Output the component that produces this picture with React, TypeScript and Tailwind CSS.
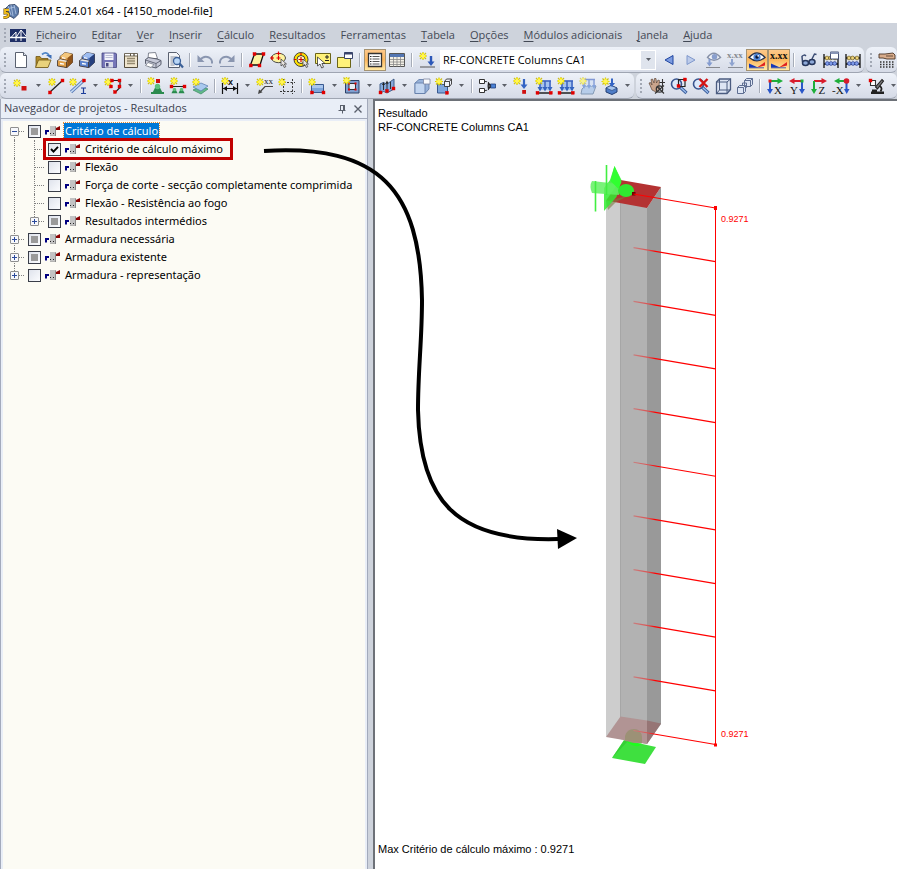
import { useState } from "react";
import type { ReactNode } from "react";

/* ---------- drawing helpers ---------- */

function Glyph({ children }: { children: ReactNode }) {
  return (
    <svg viewBox="0 0 18 18" className="h-[18px] w-[18px] shrink-0" fill="none" aria-hidden="true">
      {children}
    </svg>
  );
}

function Spark({ x = 4, y = 4 }: { x?: number; y?: number }) {
  return (
    <g>
      <path
        d={`M${x} ${y - 4}v8M${x - 4} ${y}h8M${x - 3} ${y - 3}l6 6M${x + 3} ${y - 3}l-6 6`}
        stroke="#cdbf1a"
        strokeWidth="1.2"
      />
      <path d={`M${x} ${y - 3}v6M${x - 3} ${y}h6`} stroke="#fff200" strokeWidth="1.8" />
      <circle cx={x} cy={y} r="2" fill="#fff45a" />
    </g>
  );
}

function Dot({ x, y, c = "#e00000" }: { x: number; y: number; c?: string }) {
  return <rect x={x - 1.5} y={y - 1.5} width="3" height="3" fill={c} stroke={c} strokeWidth="0.4" />;
}

const cabinet = (front: string, side: string, top: string) => (
  <>
    <path d="M4 5.500l5-4 7.500 1.500v8.500l-5.500 5-7-2z" fill={front} stroke="#3b2f28" strokeWidth="0.8" />
    <path d="M4 5.500l5-4 7.500 1.500-5 4z" fill={top} />
    <path d="M11.500 7l5-4v8.500l-5.500 5z" fill={side} />
    <path d="M1.500 9.500L4 8l7.500 1.500-1 1.500v5.500l-9-1.500z" fill={front} stroke="#3b2f28" strokeWidth="0.8" />
    <path d="M2 9.500L4 8.300l7 1.400-1 1.300z" fill="#e9e6e2" />
    <path d="M6 6.700l3.500.700M4 12.500l4 .700" stroke="#fff" strokeWidth="1.300" />
  </>
);

const abacus = (
  <>
    <path d="M2 3v14M16 3v14M2 7h14M2 13h14" stroke="#111" strokeWidth="1.3" />
    <g fill="#ecd27a" stroke="#5b4a10" strokeWidth="0.6">
      <circle cx="5" cy="7" r="1.9" />
      <circle cx="8.6" cy="7" r="1.9" />
      <circle cx="13" cy="7" r="1.9" />
    </g>
    <g fill="#7f9cea" stroke="#1d2f80" strokeWidth="0.6">
      <circle cx="5.3" cy="12.5" r="1.9" />
      <circle cx="9" cy="12.5" r="1.9" />
      <circle cx="12.6" cy="12.5" r="1.9" />
    </g>
  </>
);

const supportCone = (x: number, y: number, s: number) => (
  <g>
    <path d={`M${x - s * 1.8} ${y + s * 2.2}L${x - s * 0.7} ${y}h${s * 1.4}L${x + s * 1.8} ${y + s * 2.2}z`} fill="#2a8a4e" />
    <circle cx={x} cy={y} r={s} fill="#5cc27c" />
  </g>
);

const lineLoad = (
  <>
    <path d="M3 16h13" stroke="#222" strokeWidth="1.3" />
    <path d="M4 3.500h12V13H4z" fill="#a5c3ef" />
    <path d="M4 4h12M5 4v7M10 4v7M15 4v7" stroke="#3d62c0" strokeWidth="1.5" />
    <path d="M2.500 10h5L5 14.500zM7.500 10h5L10 14.500zM12.500 10h5L15 14.500z" fill="#3564c0" />
    <Dot x={2.500} y={15.800} />
    <Dot x={15.800} y={15.800} />
  </>
);

const magnifier = (
  <>
    <path d="M10 10l6.500 6" stroke="#3c5f9c" strokeWidth="3.200" />
    <path d="M10.500 10.500l5.500 5" stroke="#9fc0f0" strokeWidth="1.200" />
    <circle cx="6.500" cy="7" r="5" fill="#dce9fb" stroke="#39558f" strokeWidth="1.600" />
  </>
);

const eye = (
  <>
    <path d="M1 6.500Q9 -2.500 17 6.500Q9 13 1 6.500z" fill="#fff" stroke="#28324c" strokeWidth="1.400" />
    <circle cx="9" cy="6" r="3.600" fill="#4f86d8" />
    <circle cx="9" cy="6" r="1.700" fill="#0b1535" />
    <circle cx="10.200" cy="4.800" r="0.900" fill="#fff" />
  </>
);

const wedge = (
  <>
    <path d="M1 16.500v-4l9 4z" fill="#1738b8" />
    <path d="M9 16.500l8-5.500v3.500z" fill="#e02020" />
    <path d="M1 16.800h15" stroke="#1738b8" strokeWidth="0.800" />
  </>
);

const glyphs: Record<string, ReactNode> = {
  novo: (
    <>
      <path d="M3.500 1.500h8l3 3v12h-11z" fill="#fff" stroke="#5a6170" />
      <path d="M11.500 1.500v3h3" fill="#dfe5ef" stroke="#5a6170" />
    </>
  ),
  abrir: (
    <>
      <path d="M2 5.500h4l1.500 2H14V16H2z" fill="#b08a2a" stroke="#6e5614" strokeWidth="0.8" />
      <path d="M1.500 16.500l3-7.500h12.500l-3 7.500z" fill="#e9d27c" stroke="#6e5614" strokeWidth="0.8" />
      <path d="M8 3.500q4-3.500 7 .500" stroke="#4f86c8" strokeWidth="1.800" />
      <path d="M12 4h5.500v4z" fill="#3d6fb8" />
    </>
  ),
  arquivo: cabinet("#e0a04a", "#8f531a", "#f3c67c"),
  biblioteca: cabinet("#5b83cf", "#26407f", "#9dbcf0"),
  guardar: (
    <>
      <path d="M2 2h13.500l1 1V16.500H2z" fill="#7676b8" stroke="#474780" strokeWidth="0.800" />
      <path d="M4.500 2.500h9v6.500h-9z" fill="#f3f4fb" />
      <path d="M5.500 4.500h7M5.500 6.500h7" stroke="#a9adcb" strokeWidth="0.800" />
      <path d="M5 11h8v5.500H5z" fill="#d9dbe8" />
      <path d="M6 12h2.500v3.500H6z" fill="#474780" />
    </>
  ),
  relatorio: (
    <>
      <path d="M2.500 3.500h13v13h-13z" fill="#efe4cd" stroke="#544b3b" />
      <path d="M2.500 2.500h6v2.500h-6zM8.500 2.500h3.500v2.500H8.500zM12 2.500h3.500v2.500H12z" fill="#fff" stroke="#544b3b" strokeWidth="0.800" />
      <path d="M5 7.500h8M5 10h8M5 12.500h8" stroke="#95896f" strokeWidth="1.300" />
    </>
  ),
  imprimir: (
    <>
      <path d="M4 8l.500-6 7-.500 2 6z" fill="#fff" stroke="#666b78" strokeWidth="0.800" />
      <path d="M1.500 8.500l3-2 8.500 1.500 4 1.500v4L12 17l-8-2-2.500-2.500z" fill="#c6c9d8" stroke="#4c5160" strokeWidth="0.900" />
      <path d="M1.500 9l10.500 3.500 5-3M12 12.500V17" stroke="#5b6070" strokeWidth="0.900" />
      <path d="M4 11.500l6 2-3 3-5.500-2z" fill="#fff" stroke="#666b78" strokeWidth="0.700" />
    </>
  ),
  previsualizar: (
    <>
      <path d="M2.500 1.500h8l3 3v12h-11z" fill="#f4f5f8" stroke="#5a6170" />
      <path d="M4.500 6h6M4.500 8h4M4.500 10h3M4.500 12h3M4.500 14h4" stroke="#8b92a0" />
      <circle cx="11" cy="10" r="3.500" fill="#b9d6f6" stroke="#3b6098" strokeWidth="1.300" />
      <path d="M13.500 12.500l3.500 4" stroke="#3b6098" strokeWidth="2.200" />
    </>
  ),
  anular: (
    <>
      <path d="M4 9q4-5 9-2.500q3.500 2 3 6" stroke="#8a96b0" strokeWidth="2" />
      <path d="M1.500 4v7h7z" fill="#8a96b0" />
      <path d="M2 15.500h14" stroke="#8a96b0" />
    </>
  ),
  refazer: (
    <>
      <path d="M14 9q-4-5-9-2.500q-3.500 2-3 6" stroke="#8a96b0" strokeWidth="2" />
      <path d="M16.500 4v7h-7z" fill="#8a96b0" />
      <path d="M2 15.500h14" stroke="#8a96b0" />
    </>
  ),
  plano: (
    <>
      <path d="M6.500 3h9l-3.500 11H2.500z" fill="#fdf3a0" stroke="#111" strokeWidth="1.300" />
      <Dot x={6.500} y={3} />
      <Dot x={15.500} y={3} />
      <Dot x={2.800} y={14.500} />
      <Dot x={11.500} y={14.500} />
    </>
  ),
  elipse: (
    <>
      <ellipse cx="8.500" cy="7" rx="7" ry="4.700" fill="#fdf3a0" stroke="#222" strokeWidth="0.800" />
      <path d="M8.500 0.500v4M6.500 2.500h4M0 7h4M2 5v4M6.500 7h4M8.500 5v4" stroke="#e00000" strokeWidth="1.200" />
      <path d="M11 8v7l1.800-1.500 1.500 3 1.500-.800-1.500-2.700h2.200z" fill="#e8e4e0" stroke="#333" strokeWidth="0.700" />
    </>
  ),
  circulo: (
    <>
      <circle cx="9" cy="8.500" r="7" fill="#ffe100" stroke="#333" strokeWidth="0.900" />
      <circle cx="9" cy="8.500" r="4" fill="#fff9c0" stroke="#222" strokeWidth="0.900" />
      <path d="M9 6v5M6.500 8.500h5M2 8.500h2M9 2v2" stroke="#e00000" strokeWidth="1.200" />
      <path d="M11 8v7l1.800-1.500 1.500 3 1.500-.800-1.500-2.700h2.200z" fill="#e8e4e0" stroke="#333" strokeWidth="0.700" />
    </>
  ),
  selecao: (
    <>
      <path d="M1.500 2.500h15v10h-15z" fill="#fff27a" stroke="#6b6418" />
      <path d="M11 6h4M13 4v4M11 9.500h4" stroke="#222" />
      <path d="M3.500 6v9l2.500-2 1.700 4 1.800-.800-1.600-3.700H11z" fill="#fff" stroke="#333" strokeWidth="0.800" />
    </>
  ),
  pasta: (
    <>
      <path d="M1.500 6.500h13v10h-13z" fill="#fff27a" stroke="#6b6418" />
      <path d="M8.500 1.500h8v6h-8z" fill="#fff" stroke="#39446b" />
      <path d="M8.500 1.500h8v2h-8z" fill="#39446b" />
    </>
  ),
  navegador: (
    <>
      <path d="M2.500 2.500h13v13h-13z" fill="#fff" stroke="#333" strokeWidth="1.300" />
      <path d="M6.500 5.500h7M6.500 8h7M6.500 10.500h7M6.500 13h7" stroke="#555" />
      <path d="M4 5.500h1.500M4 8h1.500M4 10.500h1.500M4 13h1.500" stroke="#222" />
    </>
  ),
  tabelas: (
    <>
      <path d="M1.500 2.500h15v13h-15z" fill="#f3f0e6" stroke="#555" />
      <path d="M2 3h14v3H2z" fill="#5376b3" />
      <path d="M2 8.500h14M2 11h14M2 13.500h14M5.500 6v9.500M9 6v9.500M12.500 6v9.500" stroke="#888" strokeWidth="0.800" />
    </>
  ),
  casoNovo: (
    <>
      <Spark x={5} y={5} />
      <path d="M2 16h15" stroke="#555" strokeWidth="1.200" />
      <path d="M13 5v6" stroke="#2b57b8" strokeWidth="2.400" />
      <path d="M9.500 10.500h7L13 15z" fill="#2b57b8" />
    </>
  ),
  anterior: <path d="M13 4.500v9L5 9z" fill="#7c9be0" stroke="#1f45a0" />,
  seguinte: <path d="M5 4.500v9L13 9z" fill="#bccbea" stroke="#7f98cc" />,
  verCargas: (
    <g opacity="0.550">
      <path d="M3.500 6.500q6-8.500 13 0q-6.500 5.500-13 0z" fill="#fff" stroke="#3b4a6c" strokeWidth="1.400" />
      <circle cx="10.500" cy="5.800" r="2.800" fill="#3f63b0" />
      <path d="M5.500 8v5" stroke="#3b62b8" strokeWidth="2" />
      <path d="M2.500 11.500h6l-3 4z" fill="#3b62b8" />
      <path d="M2 16.500h14" stroke="#444" />
    </g>
  ),
  valoresCargas: (
    <>
      <text x="1" y="6.500" fontSize="9" fontFamily="Liberation Serif, serif" fontWeight="bold" fill="#85898f">x.xx</text>
      <path d="M6 8v5" stroke="#8ea3cf" strokeWidth="2" />
      <path d="M3 11.500h6l-3 4z" fill="#8ea3cf" />
      <path d="M2 16.500h15" stroke="#8a8e96" />
    </>
  ),
  verResultados: (
    <>
      {eye}
      {wedge}
    </>
  ),
  valoresResultados: (
    <>
      <text x="0" y="8" fontSize="10" fontFamily="Liberation Serif, serif" fontWeight="bold" fill="#111">x.xx</text>
      {wedge}
    </>
  ),
  oculos: (
    <>
      <path d="M2.500 11L2 5.500q2-2.500 4-.500M12 8l2.500-5 2 .500" stroke="#3b4c74" strokeWidth="1.500" />
      <ellipse cx="5.500" cy="12" rx="3" ry="2.500" fill="#8da8d8" stroke="#26365c" strokeWidth="1.500" />
      <ellipse cx="12" cy="11" rx="3" ry="2.500" fill="#8da8d8" stroke="#26365c" strokeWidth="1.500" />
    </>
  ),
  calcularJanela: (
    <>
      {abacus}
      <path d="M8.500 1h8v7h-8z" fill="#fff" stroke="#39446b" strokeWidth="0.900" />
      <path d="M8.500 1h8v2h-8z" fill="#8794b5" />
    </>
  ),
  calcular: abacus,
  malha: (
    <>
      <path d="M1 3h6l8-1 2 2v4H9L5 7H1z" fill="#d8ac8c" stroke="#4d3526" strokeWidth="0.900" />
      <path d="M8 5h7" stroke="#4d3526" strokeWidth="0.800" />
      <path d="M2 11h15M2 13.500h15M2 16h15" stroke="#333" strokeWidth="1.300" strokeDasharray="1.500 1.500" />
    </>
  ),
  no: (
    <>
      <Spark x={5} y={6} />
      <rect x="9.500" y="9" width="5" height="4.500" fill="#d01010" />
    </>
  ),
  linha: (
    <>
      <path d="M3 15L15 4" stroke="#222" strokeWidth="1.300" />
      <Spark x={5} y={5} />
      <Dot x={3} y={15.500} />
      <Dot x={15.500} y={3.500} />
    </>
  ),
  barra: (
    <>
      <path d="M2 15L14 4" stroke="#5a7cb8" strokeWidth="3.200" />
      <path d="M2 15L14 4" stroke="#c5daf5" strokeWidth="1.600" />
      <Spark x={4} y={5} />
      <Dot x={15} y={3.500} />
      <path d="M12 11h5M14.500 11v5.500M12 16.500h5" stroke="#1d3d9a" strokeWidth="1.200" />
    </>
  ),
  poligono: (
    <>
      <path d="M7 3.500h9v7l-5 5" stroke="#222" strokeWidth="1.200" />
      <Spark x={4} y={5} />
      <Dot x={8} y={3.500} />
      <Dot x={15.500} y={3.500} />
      <Dot x={7} y={9.500} />
      <Dot x={15.500} y={9.500} />
      <Dot x={11} y={15} />
    </>
  ),
  apoioNo: (
    <>
      <Spark x={4} y={4} />
      {supportCone(10.500, 9.500, 2.700)}
      <path d="M4 16h13" stroke="#2a8a4e" strokeWidth="1.800" />
      <rect x="9" y="2" width="4" height="4" fill="#d01010" />
    </>
  ),
  apoioLinha: (
    <>
      <path d="M2 9.500h14" stroke="#222" strokeWidth="1.200" />
      <Spark x={5} y={4} />
      <Dot x={2.500} y={9.500} />
      <Dot x={15.500} y={9.500} />
      {supportCone(5.500, 12.500, 1.700)}
      {supportCone(12.500, 12.500, 1.700)}
    </>
  ),
  apoioSuperficie: (
    <>
      <path d="M2 13l8-4 7 3-7 5z" fill="#62b98a" stroke="#3a8a60" strokeWidth="0.700" />
      <path d="M2 10l8-4 7 3-7 5z" fill="#a9c9ee" stroke="#5578aa" strokeWidth="0.700" />
      <Spark x={5} y={5} />
    </>
  ),
  cota: (
    <>
      <Spark x={4} y={4} />
      <path d="M1.500 6v11M16.500 6v11" stroke="#111" strokeWidth="1.200" />
      <path d="M2 11.500h14" stroke="#111" strokeWidth="1.200" />
      <path d="M2 11.500l4-2.500v5zM16 11.500l-4-2.500v5z" fill="#111" />
      <text x="7" y="8" fontSize="9" fontFamily="Liberation Sans, sans-serif" fontWeight="bold" fill="#111">x</text>
    </>
  ),
  anotacao: (
    <>
      <Spark x={4} y={5} />
      <text x="8" y="7" fontSize="9" fontFamily="Liberation Serif, serif" fill="#222">xx</text>
      <path d="M17 9.500H9l-5 5.500" stroke="#444" strokeWidth="1.200" />
      <path d="M2 17l1-4.500 3.500 2.800z" fill="#444" />
    </>
  ),
  linhaAuxiliar: (
    <>
      <path d="M5.500 2v15M14.500 2v15M2 5.500h15M2 14.500h15" stroke="#333" strokeDasharray="2 1.500" />
      <Spark x={4} y={5} />
    </>
  ),
  superficie: (
    <>
      <path d="M3.500 7.500h12v8h-12z" fill="#7ea6dc" stroke="#39598f" />
      <path d="M4 8h11v3H4z" fill="#a9c6ee" />
      <Spark x={4} y={5} />
      <Dot x={4} y={15.500} />
      <Dot x={15.500} y={15.500} />
    </>
  ),
  abertura: (
    <>
      <path d="M2.500 3.500h13.500v12.500H2.500z" fill="#7f9fd0" stroke="#2d4066" />
      <path d="M6 6.500h6.500v6H6z" fill="#e8edf5" stroke="#222" strokeWidth="0.900" />
      <rect x="5" y="5.500" width="2" height="2" fill="#e00000" />
      <rect x="11.500" y="5.500" width="2" height="2" fill="#e00000" />
      <rect x="5" y="11.500" width="2" height="2" fill="#e00000" />
      <rect x="11.500" y="11.500" width="2" height="2" fill="#e00000" />
      <Spark x={3.500} y={3.500} />
    </>
  ),
  superficieCurva: (
    <>
      <path d="M2 7q3-3 7 0l7-5v10l-7 4q-3-3-7 0z" fill="#86a9dc" stroke="#34537f" strokeWidth="0.900" />
      <path d="M9 6v8M5.500 7v6M12.500 5v7" stroke="#222" strokeWidth="0.900" />
      <path d="M4 8l1.500-3L7 8zM7.500 6.500L9 3.500l1.500 3z" fill="#222" />
      <Dot x={2.500} y={15.500} />
      <Dot x={9} y={14} />
      <Dot x={15.500} y={11.500} />
    </>
  ),
  solido: (
    <g opacity="0.750">
      <path d="M2 6l4-3.500h10V12l-4 4.500H2z" fill="#7d9fd2" stroke="#3c5f94" strokeWidth="0.900" />
      <path d="M2 6h10v10.500H2z" fill="#b8d0f0" stroke="#3c5f94" strokeWidth="0.900" />
      <path d="M10.500 2h6.500v5h-6.500z" fill="#fff" stroke="#5a6687" strokeWidth="0.800" />
    </g>
  ),
  solidoNovo: (
    <>
      <path d="M2.500 7.500h10v8.500h-10z" fill="#7ea6dc" stroke="#39598f" />
      <path d="M9.500 4.500h5v5h-5zM9.500 4.500l2-2.500h5v5l-2 2.500M14.500 4.500l2-2.500" fill="#eef2fa" stroke="#333" strokeWidth="0.900" />
      <Spark x={4} y={4.500} />
      <Dot x={12} y={15.800} />
    </>
  ),
  combinacao: (
    <>
      <path d="M1.500 2.500h5v4h-5zM1.500 11.500h5v4h-5z" fill="#fff" stroke="#333" />
      <path d="M7 4.500q4 0 5 3M7 13.500q4 0 5-3" stroke="#333" strokeDasharray="2 1" />
      <path d="M12.500 7h5v4h-5z" fill="#4b82d6" stroke="#1d3d7c" strokeWidth="0.800" />
      <path d="M10 5l3.500 3.500-4 .500zM10 13l3.500-3.500-4-.500z" fill="#222" />
    </>
  ),
  cargaNo: (
    <>
      <Spark x={4} y={4} />
      <path d="M11 2v6" stroke="#3464c4" strokeWidth="2.200" />
      <path d="M7.500 7.500h7L11 12z" fill="#3464c4" />
      <rect x="9.200" y="13" width="3.800" height="3.800" fill="#d01010" />
    </>
  ),
  cargaBarra: (
    <>
      {lineLoad}
      <Spark x={4} y={4} />
    </>
  ),
  cargaSuperficie: (
    <g opacity="0.600">
      <path d="M3 12l3-3h11l-3 8H2z" fill="#9dbfe8" stroke="#48688f" />
      <path d="M4 2.500h12V9H4z" fill="#cfdef5" />
      <path d="M4 2.500h12M5 2v7M10 2v7M15 2v7" stroke="#3d62c0" strokeWidth="1.300" />
      <path d="M3 8h4l-2 4zM8 8h4l-2 4zM13 8h4l-2 4z" fill="#4878d0" />
      <Spark x={4} y={4} />
    </g>
  ),
  cargaLivre: (
    <>
      <path d="M5 11l5-2.500 6 2.500v4l-5 2.500-6-2.500z" fill="#4e7cc6" stroke="#243f73" />
      <path d="M5 11l6 2.500 5-2.500-6-2.500z" fill="#a9c6ee" stroke="#243f73" strokeWidth="0.600" />
      <path d="M11 1.500v5" stroke="#3464c4" strokeWidth="2" />
      <path d="M8 6h6l-3 4z" fill="#3464c4" />
      <Spark x={4.500} y={4.500} />
    </>
  ),
  mover: (
    <>
      <path d="M4 13L1 6l1.500-.500L4 8 3 2.500l1.500-.500L6 6l.500-4.500H8L8.500 6l1.500-3 1.500.500L11 9l1 3-3 3.500z" fill="#c9a48c" stroke="#4d3526" strokeWidth="0.600" />
      <circle cx="11.500" cy="12" r="3.200" stroke="#333" strokeWidth="1.300" />
      <path d="M9 9.500l7 7M14.500 2v7M11.500 5.500H17M7 16.500l9-8" stroke="#333" strokeWidth="1.100" />
    </>
  ),
  zoomJanela: (
    <>
      {magnifier}
      <path d="M8.500 2.500h6.500v7H8.500z" stroke="#222" strokeWidth="1.200" />
      <Dot x={15} y={2.500} />
      <Dot x={8.500} y={9} />
    </>
  ),
  zoomTudo: (
    <>
      {magnifier}
      <path d="M7.500 2l8 8M15.500 2l-8 8" stroke="#d41414" strokeWidth="2.400" />
    </>
  ),
  cubo: (
    <>
      <path d="M2.500 5l3-3h11v10.500l-3.500 4H2.500z" fill="#dde5f4" stroke="#4b5c80" strokeWidth="1.300" />
      <path d="M2.500 5H13v11.500M13 5l3.500-3M5.500 2v11h11M5.500 13l-3 3.500" stroke="#4b5c80" />
    </>
  ),
  projecao: (
    <>
      <path d="M8.500 3.500l2-2h6v6l-2 2h-6z" fill="#dde5f4" stroke="#5f6f92" />
      <path d="M8.500 3.500h6v6M14.500 3.500l2-2" stroke="#5f6f92" />
      <path d="M1.500 10.500l2-2h6v6l-2 2h-6z" fill="#dde5f4" stroke="#5f6f92" />
      <path d="M1.500 10.500h6v6M7.500 10.500l2-2M6.500 8V6h4v4.500h-1" stroke="#5f6f92" />
    </>
  ),
  vistaX: (
    <>
      <path d="M4 4h9" stroke="#1fae3a" strokeWidth="2" />
      <path d="M11.500 1L17 4l-5.500 3z" fill="#1fae3a" />
      <path d="M4 4v9" stroke="#2b57c8" strokeWidth="2" />
      <path d="M1 12h6l-3 5z" fill="#2b57c8" />
      <rect x="2.500" y="2.500" width="3" height="3" fill="#e02020" />
      <text x="8" y="16.500" fontSize="11" fontFamily="Liberation Serif, serif" fill="#111">X</text>
    </>
  ),
  vistaY: (
    <>
      <path d="M14 4H5" stroke="#d81c2c" strokeWidth="2" />
      <path d="M6.500 1L1 4l5.500 3z" fill="#d81c2c" />
      <path d="M14 4v9" stroke="#2b57c8" strokeWidth="2" />
      <path d="M11 12h6l-3 5z" fill="#2b57c8" />
      <rect x="12.500" y="2.500" width="3" height="3" fill="#1fae3a" />
      <text x="2" y="16.500" fontSize="11" fontFamily="Liberation Serif, serif" fill="#111">Y</text>
    </>
  ),
  vistaZ: (
    <>
      <path d="M4 4h9" stroke="#d81c2c" strokeWidth="2" />
      <path d="M11.500 1L17 4l-5.500 3z" fill="#d81c2c" />
      <path d="M4 4v9" stroke="#1fae3a" strokeWidth="2" />
      <path d="M1 12h6l-3 5z" fill="#1fae3a" />
      <text x="8.500" y="16.500" fontSize="11" fontFamily="Liberation Serif, serif" fill="#111">Z</text>
    </>
  ),
  vistaMenosX: (
    <>
      <path d="M14 4H6" stroke="#1fae3a" strokeWidth="2" />
      <path d="M7.500 1L2 4l5.500 3z" fill="#1fae3a" />
      <path d="M14.500 4v9" stroke="#2b57c8" strokeWidth="2" />
      <path d="M12 12h5.500L14.700 17z" fill="#2b57c8" />
      <circle cx="14.500" cy="4" r="2.800" fill="#d81c2c" />
      <text x="0" y="16.500" fontSize="11" fontFamily="Liberation Serif, serif" fill="#111">-X</text>
    </>
  ),
  planoTrabalho: (
    <>
      <path d="M3.500 3.500h5v5h-5z" fill="#fff" stroke="#333" strokeWidth="1.100" />
      <Dot x={3.500} y={3.500} />
      <path d="M15 2.500L8.500 10l2 2 6-8z" fill="#777" stroke="#222" strokeWidth="1.100" />
      <path d="M12.500 9q3.500 2 1 5.500" stroke="#222" strokeWidth="1.800" />
      <path d="M4 14.500h13V17H4zM5 12.500h5v2H5z" fill="#222" />
    </>
  ),
};

/* ---------- toolbar parts ---------- */

type Item =
  | { kind: "icon"; name: string; label: string; on?: boolean }
  | { kind: "drop"; label: string }
  | { kind: "sep" };

const ic = (name: string, label: string, on = false): Item => ({ kind: "icon", name, label, on });
const dd = (label: string): Item => ({ kind: "drop", label });
const sp: Item = { kind: "sep" };

function Caret() {
  return (
    <svg viewBox="0 0 5 3" className="h-[3px] w-[5px]" aria-hidden="true">
      <path d="M0 0h5L2.500 3z" fill="#5c6068" />
    </svg>
  );
}

function Items({ list }: { list: Item[] }) {
  return (
    <>
      {list.map((it, i) => {
        if (it.kind === "sep") return <span key={i} className="mx-[3px] h-[14px] w-[2px] shrink-0 border-l border-[#a6acb8] bg-white" />;
        if (it.kind === "drop")
          return (
            <button key={i} type="button" aria-label={it.label} className="flex h-[22px] w-[13px] shrink-0 items-center justify-center">
              <Caret />
            </button>
          );
        return (
          <button
            key={i}
            type="button"
            aria-label={it.label}
            className={
              it.on
                ? "flex h-[22px] w-[22px] shrink-0 items-center justify-center border border-[#a59372] bg-gradient-to-b from-[#fdc88a] via-[#fdb75c] to-[#ffe9a4]"
                : "flex h-[22px] w-[22px] shrink-0 items-center justify-center"
            }
          >
            <Glyph>{glyphs[it.name]}</Glyph>
          </button>
        );
      })}
    </>
  );
}

function Grip() {
  return (
    <span className="flex w-[10px] shrink-0 flex-col items-center gap-[2px]">
      {[0, 1, 2, 3].map((n) => (
        <span key={n} className="h-[2px] w-[2px] bg-[#a2a8b4]" />
      ))}
    </span>
  );
}

const bar =
  "flex h-[26px] items-center overflow-hidden rounded-md border-b border-[#9fa5b2] bg-gradient-to-b from-[#eef2f9] to-[#d6dbe7]";

const mainBarA: Item[] = [
  ic("novo", "Novo"), ic("abrir", "Abrir"), ic("arquivo", "Gestor de projetos"), ic("biblioteca", "Biblioteca de blocos"),
  ic("guardar", "Guardar"), ic("relatorio", "Relatório"), ic("imprimir", "Imprimir"), ic("previsualizar", "Pré-visualizar"), sp,
  ic("anular", "Anular"), ic("refazer", "Refazer"), sp,
  ic("plano", "Plano"), ic("elipse", "Elipse"), ic("circulo", "Círculo"), ic("selecao", "Seleção"), ic("pasta", "Vistas"), sp,
  ic("navegador", "Navegador", true), ic("tabelas", "Tabelas"), sp,
  ic("casoNovo", "Novo caso de carga"),
];

const mainBarB: Item[] = [
  ic("anterior", "Anterior"), ic("seguinte", "Seguinte"), ic("verCargas", "Mostrar cargas"), ic("valoresCargas", "Valores das cargas"),
  ic("verResultados", "Mostrar resultados", true), ic("valoresResultados", "Valores dos resultados", true), sp,
  ic("oculos", "Vista"), ic("calcularJanela", "Opções de cálculo"), ic("calcular", "Calcular tudo"),
];

const insertBar: Item[] = [
  ic("no", "Nó"), dd("Mais nós"), ic("linha", "Linha"), ic("barra", "Barra"), dd("Mais barras"),
  ic("poligono", "Polígono"), dd("Mais linhas"), sp,
  ic("apoioNo", "Apoio de nó"), ic("apoioLinha", "Apoio de linha"), ic("apoioSuperficie", "Apoio de superfície"), sp,
  ic("cota", "Cota"), dd("Mais cotas"), ic("anotacao", "Anotação"), ic("linhaAuxiliar", "Linha auxiliar"), sp,
  ic("superficie", "Superfície"), dd("Mais superfícies"), ic("abertura", "Abertura"), dd("Mais aberturas"),
  ic("superficieCurva", "Superfície curva"), dd("Mais curvas"), ic("solido", "Sólido"), ic("solidoNovo", "Novo sólido"), dd("Mais sólidos"), sp,
  ic("combinacao", "Combinação"), dd("Mais combinações"), ic("cargaNo", "Carga de nó"), ic("cargaBarra", "Carga de barra"),
  ic("cargaBarra", "Carga de linha"), ic("cargaSuperficie", "Carga de superfície"), ic("cargaLivre", "Carga livre"), dd("Mais cargas"),
];

const viewBar: Item[] = [
  ic("mover", "Mover"), ic("zoomJanela", "Zoom janela"), ic("zoomTudo", "Zoom tudo"), ic("cubo", "Perspetiva"), ic("projecao", "Isometria"), sp,
  ic("vistaX", "Vista X"), ic("vistaY", "Vista Y"), ic("vistaZ", "Vista Z"), ic("vistaMenosX", "Vista -X"), dd("Mais vistas"),
  ic("planoTrabalho", "Plano de trabalho"), dd("Mais planos"),
];

/* ---------- menu ---------- */

const menus: [string, string, string][] = [
  ["", "F", "icheiro"], ["E", "d", "itar"], ["", "V", "er"], ["", "I", "nserir"], ["", "C", "álculo"], ["", "R", "esultados"],
  ["Ferrame", "n", "tas"], ["", "T", "abela"], ["", "O", "pções"], ["", "M", "ódulos adicionais"], ["", "J", "anela"], ["", "A", "juda"],
];

/* ---------- navigator tree ---------- */

type Row = { text: string; level: 0 | 1; state: "on" | "off" | "mixed"; toggle?: "+" | "-"; selected?: boolean; boxed?: boolean };

const rows: Row[] = [
  { text: "Critério de cálculo", level: 0, state: "mixed", toggle: "-", selected: true },
  { text: "Critério de cálculo máximo", level: 1, state: "on", boxed: true },
  { text: "Flexão", level: 1, state: "off" },
  { text: "Força de corte - secção completamente comprimida", level: 1, state: "off" },
  { text: "Flexão - Resistência ao fogo", level: 1, state: "off" },
  { text: "Resultados intermédios", level: 1, state: "mixed", toggle: "+" },
  { text: "Armadura necessária", level: 0, state: "mixed", toggle: "+" },
  { text: "Armadura existente", level: 0, state: "mixed", toggle: "+" },
  { text: "Armadura - representação", level: 0, state: "off", toggle: "+" },
];

function Guide({ line, half, toggle, branch }: { line?: boolean; half?: "top" | "bottom"; toggle?: "+" | "-"; branch?: boolean }) {
  const span = half === "top" ? "bottom-1/2 top-0" : half === "bottom" ? "bottom-0 top-1/2" : "inset-y-0";
  return (
    <span className="relative flex h-[18px] w-5 shrink-0 items-center pl-1">
      {line && <span className={`absolute left-2 border-l border-dotted border-[#808080] ${span}`} />}
      {branch && <span className="absolute left-2 right-[2px] top-[9px] border-t border-dotted border-[#808080]" />}
      {toggle && (
        <button type="button" aria-label={toggle === "+" ? "Expandir" : "Recolher"} className="relative flex h-[9px] w-[9px] items-center justify-center rounded-[1px] border border-[#8f8f8f] bg-[#f7f8fb]">
          <span className="absolute h-px w-[5px] bg-[#2b4a9b]" />
          {toggle === "+" && <span className="absolute h-[5px] w-px bg-[#2b4a9b]" />}
        </button>
      )}
    </span>
  );
}

function TreeRow({ row, index }: { row: Row; index: number }) {
  const [on, setOn] = useState(row.state === "on");
  const id = `resultado-${index}`;
  const last = index === rows.length - 1;
  return (
    <li className="relative flex h-[18px] items-center pl-[3px]">
      {row.level === 1 && <Guide line />}
      <Guide
        line
        branch
        half={index === 0 ? "bottom" : last || row.text === "Resultados intermédios" ? "top" : undefined}
        toggle={row.toggle}
      />
      <span className="relative ml-[2px] flex h-[13px] w-[13px] shrink-0 items-center justify-center">
        <input
          id={id}
          type="checkbox"
          checked={on}
          onChange={(e) => setOn(e.target.checked)}
          className="h-[13px] w-[13px] appearance-none border border-[#3a3e49] bg-gradient-to-br from-[#dfe3ec] to-[#fbfcfe]"
        />
        {row.state === "mixed" && <span className="pointer-events-none absolute h-[7px] w-[7px] bg-[#9a9a9a]" />}
        {on && (
          <svg viewBox="0 0 9 9" className="pointer-events-none absolute h-[9px] w-[9px]" aria-hidden="true">
            <path d="M1 4l2.500 2.700L8 1.800" fill="none" stroke="#000" strokeWidth="1.900" />
          </svg>
        )}
      </span>
      <svg viewBox="0 0 15 12" className="ml-1 h-3 w-[15px] shrink-0" aria-hidden="true">
        <path d="M0 5h4v2H2v2.500H0z" fill="#000080" />
        <path d="M11 5V3L15 1v4z" fill="#8b0000" />
        <path d="M5 1h5v9.500H5z" fill="#c3c3c3" />
        <path d="M10 1l1 .500v9.500H5v-.500h5z" fill="#8a8a8a" />
        <path d="M5 8.500h1M8 8.500h1" stroke="#222" />
      </svg>
      <label
        htmlFor={id}
        className={
          row.selected
            ? "ml-1 whitespace-nowrap bg-[#0078d7] px-[1px] leading-4 text-white outline-1 outline-dotted outline-[#e08a3c]"
            : "ml-1 whitespace-nowrap px-[1px] leading-4 text-black"
        }
      >
        {row.text}
      </label>
      {row.boxed && <span className="pointer-events-none absolute -bottom-[2px] -top-[2px] left-10 w-[190px] border-[3px] border-[#c00000]" />}
    </li>
  );
}

/* ---------- column model ---------- */

const STEP = 53.65;
const TOP = 58;

function ColumnModel() {
  const ends = Array.from({ length: 11 }, (_, n) => TOP + STEP * n);
  return (
    <svg viewBox="580 0 180 630" className="ml-[205px] mt-4 h-[630px] w-[180px] shrink-0" role="img" aria-label="Coluna com diagrama do critério de cálculo">
      <defs>
        <linearGradient id="fade" gradientUnits="userSpaceOnUse" x1="633" y1="0" x2="655" y2="0">
          <stop offset="0" stopColor="#c88080" />
          <stop offset="0.700" stopColor="#dc5050" />
          <stop offset="1" stopColor="#ff0000" />
        </linearGradient>
      </defs>
      {/* base support */}
      <path d="M624 590l32 7-11 17-33-6z" fill="#3fe03f" />
      <path d="M612 608l12-17 4 0z" fill="#35cf35" />
      {/* faces */}
      <path d="M606 50l14 2.500v536l-14-2z" fill="#cdcdcd" />
      <path d="M620 40h27v554l-27-5z" fill="#b2b2b2" />
      <path d="M647 58l14-21v537l-14 20z" fill="#999999" />
      <path d="M620.500 50v538" stroke="#a6a6a6" />
      {/* lower section */}
      <path d="M620.500 566.500l26.500 4v23.500l-41-7z" fill="#b19494" />
      <path d="M647 570.500l14 3-14 20.500z" fill="#967575" />
      <path d="M625 591v-5q2-7 9-7t8 8v6q-8 1-17-2z" fill="#9a9072" fillOpacity="0.900" />
      <path d="M626 591q8 3 16 2.500l-3 2.500q-7 1-13-5z" fill="#1cff1c" />
      {/* upper section */}
      <path d="M620.500 30l40.500 7-14 21-41-7.500z" fill="#b43232" />
      {/* head support */}
      <path d="M606 51l22-5-12 6-8 8z" fill="#7d7a40" fillOpacity="0.600" />
      <path d="M604 61V38l6-8 4.500-14 7 14-5 17z" fill="#30ec30" fillOpacity="0.850" />
      <path d="M592 31l27 3v11l-27-2q-3-7 0-12z" fill="#62f062" fillOpacity="0.850" />
      <path d="M595.500 31v30.500M606.500 15v30" stroke="#41ee41" strokeWidth="1.600" />
      <ellipse cx="626" cy="40.500" rx="8" ry="6.500" fill="#30e830" />
      <path d="M614.500 16l7 16-3 7-8-8z" fill="#30ff30" />
      <rect x="632" y="42" width="3.500" height="3.500" fill="#6e0000" />
      {/* result diagram */}
      {ends.map((y, n) => (
        <path key={n} d={`M633.500 ${y - 14}L715.500 ${y}`} fill="none" stroke={n === 0 ? "#ff0000" : "url(#fade)"} strokeWidth="1.200" />
      ))}
      <path d={`M715.500 ${TOP}V${TOP + STEP * 10}`} stroke="#ff0000" />
      <rect x="714" y={TOP - 2} width="3" height="4" fill="#ff0000" />
      <rect x="714" y={TOP + STEP * 10 - 1} width="3" height="3" fill="#ff0000" />
      <text x="721" y="72" fontSize="9" fill="#ff0000">0.9271</text>
      <text x="721" y="587" fontSize="9" fill="#ff0000">0.9271</text>
    </svg>
  );
}

export default function App() {
  return (
    <div className="flex min-h-screen w-full flex-col overflow-hidden bg-[#ced3dc] font-['Open_Sans','Noto_Sans',sans-serif] text-[11px]">
      <header className="flex h-[23px] shrink-0 items-center gap-[5px] bg-white pl-[2px] font-['Noto_Sans','Open_Sans',sans-serif] text-black">
        <svg viewBox="0 0 17 17" className="h-[17px] w-[17px]" aria-hidden="true">
          <path d="M3 6l4-4 6-.500 4 4-1 6-4 4-5-3z" fill="#5d7cab" stroke="#26395c" strokeWidth="0.800" />
          <path d="M6 3l3 9M9 2l2 11M12 2l2 9M4 6l9-2" stroke="#b4c8e6" strokeWidth="0.800" />
          <path d="M7 7H3v3q3.500-.500 3.500 2T1.500 14.500" fill="none" stroke="#5a430a" strokeWidth="3" />
          <path d="M7 7H3v3q3.500-.500 3.500 2T1.500 14.500" fill="none" stroke="#f6c21c" strokeWidth="1.800" />
        </svg>
        <h1>RFEM 5.24.01 x64 - [4150_model-file]</h1>
      </header>

      <nav className="flex h-6 shrink-0 items-center text-[#434955]" aria-label="Menu principal">
        <Grip />
        <svg viewBox="0 0 16 13" className="mr-[10px] h-[13px] w-4" aria-hidden="true">
          <path d="M0 0h16v13H0z" fill="#1f2f66" />
          <path d="M0 8.500h16" stroke="#fff" strokeWidth="1.500" />
          <path d="M6 3v9M11 1v11M6 3L1 8.500M11 1L6 8.500M11 1l5 6" stroke="#fff" strokeWidth="1" fill="none" />
        </svg>
        <div className="flex gap-[15px]">
          {menus.map(([before, key, after]) => (
            <button key={before + key + after} type="button" className="whitespace-nowrap">
              {before}
              <span className="underline underline-offset-2">{key}</span>
              {after}
            </button>
          ))}
        </div>
      </nav>

      <div className="flex shrink-0 gap-[2px]">
        <div className={`${bar} shrink-0`} role="toolbar" aria-label="Principal">
          <Grip />
          <Items list={mainBarA} />
          <div className="relative mx-[2px] flex h-5 w-[216px] shrink-0 bg-white">
            <select
              aria-label="Caso de carga"
              className="h-5 w-full appearance-none bg-white pl-[3px] leading-5 text-black outline-none"
              defaultValue="ca1"
            >
              <option value="ca1">RF-CONCRETE Columns CA1</option>
            </select>
            <span className="pointer-events-none absolute inset-y-px right-px flex w-[14px] items-center justify-center bg-[#dfe4ed]">
              <Caret />
            </span>
          </div>
          <Items list={mainBarB} />
        </div>
        <div className={`${bar} min-w-0 flex-1`} role="toolbar" aria-label="Malha">
          <Grip />
          <Items list={[ic("malha", "Malha")]} />
        </div>
      </div>

      <div className="flex shrink-0 gap-[2px]">
        <div className={`${bar} shrink-0`} role="toolbar" aria-label="Inserir">
          <Grip />
          <Items list={insertBar} />
        </div>
        <div className={`${bar} min-w-0 flex-1`} role="toolbar" aria-label="Vista">
          <Grip />
          <Items list={viewBar} />
        </div>
      </div>

      <main className="relative flex flex-1 gap-[5px]">
        <aside className="flex w-[368px] shrink-0 flex-col border-x border-[#a3aabb] bg-[#e9eef7]">
          <div className="flex h-[20px] items-center border-b border-[#a3aabb] pl-[3px] pr-[4px] text-[#3b4150]">
            <h2 className="flex-1">Navegador de projetos - Resultados</h2>
            <button type="button" aria-label="Fixar" className="mr-[6px]">
              <svg viewBox="0 0 10 10" className="h-[10px] w-[10px]" fill="none" stroke="#5a606c" aria-hidden="true">
                <path d="M3.500 1v5M7.500 1v5M3 1.500h5M1.500 6.500h7M5.500 6.500v3M6.500 1v5" />
              </svg>
            </button>
            <button type="button" aria-label="Fechar">
              <svg viewBox="0 0 10 10" className="h-[10px] w-[10px]" fill="none" stroke="#5a606c" strokeWidth="1.400" aria-hidden="true">
                <path d="M1.500 1.500l7 7M8.500 1.500l-7 7" />
              </svg>
            </button>
          </div>
          <ul className="mx-[2px] mt-[2px] flex-1 bg-[#fcfbf4] pt-px font-['Noto_Sans','Open_Sans',sans-serif]">
            {rows.map((r, i) => (
              <TreeRow key={r.text} row={r} index={i} />
            ))}
          </ul>
        </aside>

        <section className="flex min-w-0 flex-1 flex-col border-l-2 border-t-2 border-[#6d7178] bg-white pt-[5px] font-['Liberation_Sans',Arial,sans-serif] text-[11px] leading-[14px] text-black">
          <p className="pl-[3px]">Resultado</p>
          <p className="pl-[3px]">RF-CONCRETE Columns CA1</p>
          <ColumnModel />
          <p className="mt-auto pb-[13px] pl-[3px]">Max Critério de cálculo máximo : 0.9271</p>
        </section>

        <svg viewBox="260 140 320 414" className="pointer-events-none absolute left-[260px] top-[41px] h-[414px] w-[320px]" aria-hidden="true">
          <path d="M264 151C380 144 420 190 422 300C422 340 418 370 418 410C420 500 455 542 558 539" fill="none" stroke="#000" strokeWidth="4" />
          <path d="M557 529l20 9-19 11z" fill="#000" />
        </svg>
      </main>
    </div>
  );
}
